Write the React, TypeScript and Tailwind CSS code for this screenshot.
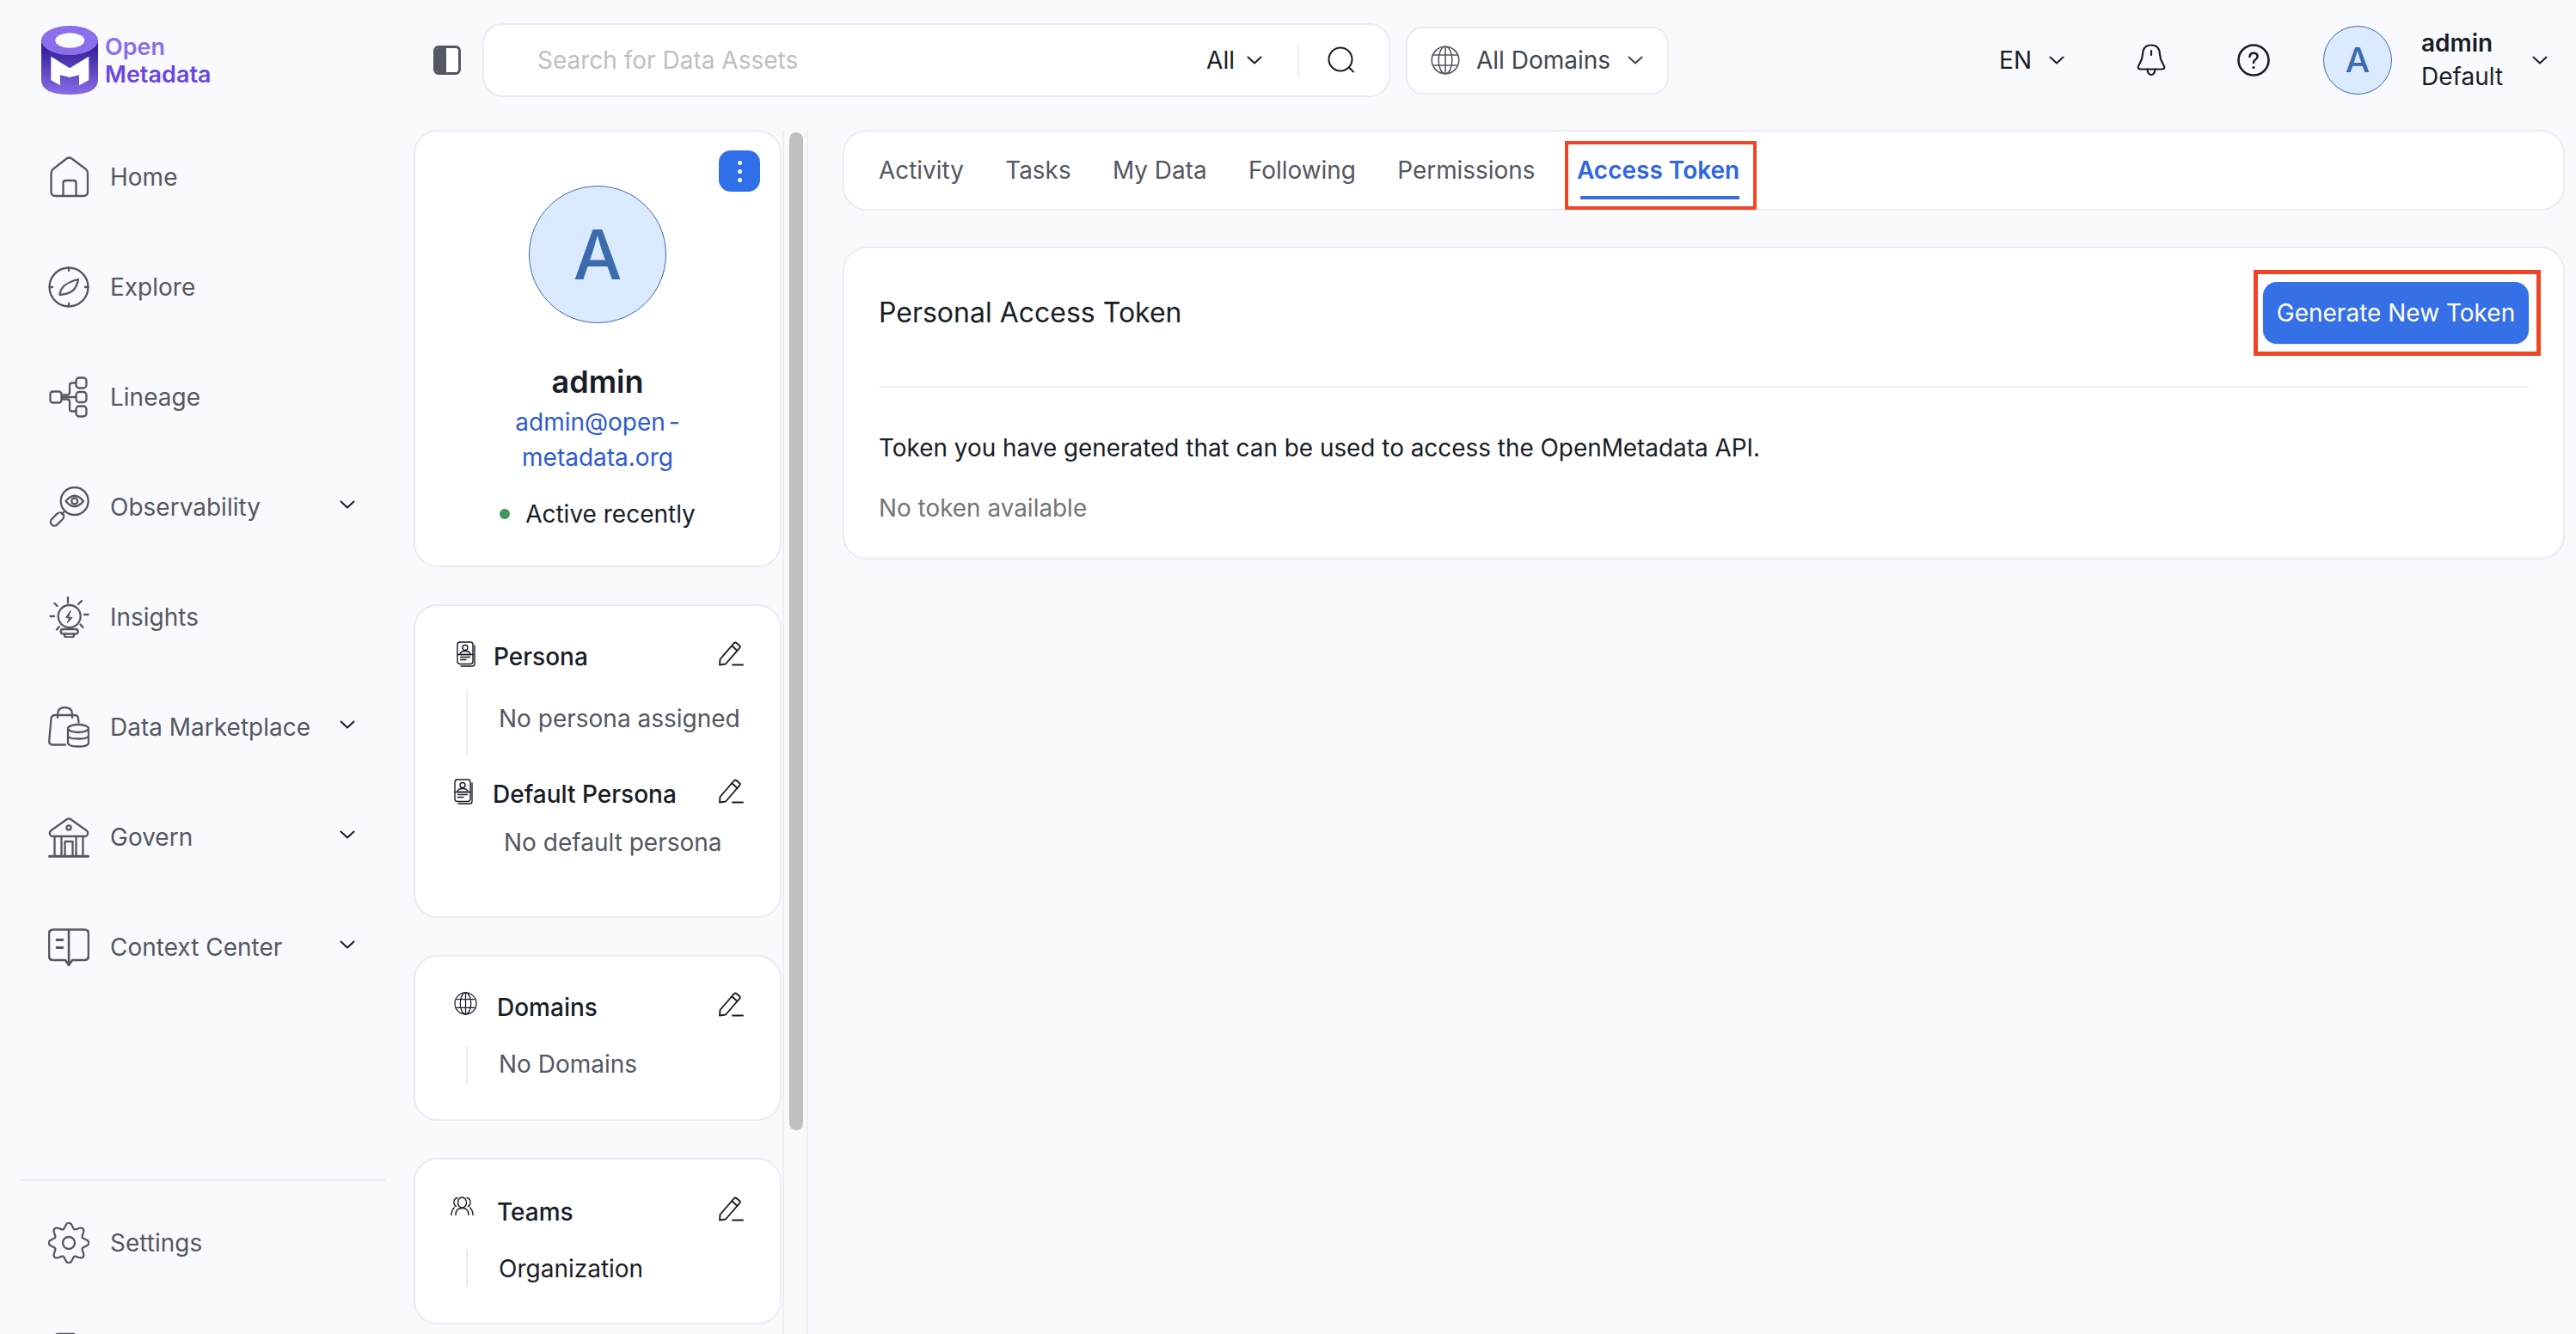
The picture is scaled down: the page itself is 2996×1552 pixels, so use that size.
import type { ReactNode } from 'react'

// 8 lobed gear outline for the settings entry
const gearPath = Array.from({ length: 145 }, (_, i) => {
  const t = (i / 144) * Math.PI * 2
  const r = 20.2 + 3.2 * Math.cos(8 * t)
  const x = 24 + r * Math.sin(t)
  const y = 24 - r * Math.cos(t)
  return `${i === 0 ? 'M' : 'L'}${x.toFixed(2)} ${y.toFixed(2)}`
}).join(' ')

function NavSvg({ children }: { children: ReactNode }) {
  return (
    <svg
      viewBox="0 0 48 48"
      fill="none"
      stroke="#535862"
      strokeWidth="2.3"
      strokeLinecap="round"
      strokeLinejoin="round"
      className="w-[48px] h-[48px] shrink-0"
    >
      {children}
    </svg>
  )
}

const HomeIcon = () => (
  <NavSvg>
    <path d="M21.5 2.5L6 14.5Q3.500 16.500 3.500 19.500V41Q3.500 46 8.500 46H41Q46 46 46 41V19.500Q46 16.500 43.500 14.500L27.500 2.500Q24.500 .5 21.500 2.500Z" />
    <path d="M17.500 46V31Q17.500 28 20.500 28H29.500Q32.500 28 32.500 31V46" />
  </NavSvg>
)

const ExploreIcon = () => (
  <NavSvg>
    <circle cx="24" cy="24" r="22.500" />
    <path d="M24 1.500V5M24 43V46.500M1.500 24H5M43 24H46.500" />
    <path d="M13.500 33C14.500 25 19 19 35 15C33 27 27 32 13.500 33Z" />
  </NavSvg>
)

const LineageIcon = () => (
  <NavSvg>
    <rect x="2.500" y="17.500" width="13" height="13" rx="3" />
    <rect x="32.500" y="1.500" width="12" height="12" rx="3.500" />
    <rect x="32.500" y="18" width="12" height="12" rx="3.500" />
    <rect x="32.500" y="34.500" width="12" height="12" rx="3.500" />
    <path d="M16 21.500H22Q25 21.500 25 18.500V10Q25 7.500 28 7.500H32.500" />
    <path d="M16 26.500H22Q25 26.500 25 29.500V38Q25 40.500 28 40.500H32.500" />
    <path d="M16 24H32.500" />
  </NavSvg>
)

const ObservabilityIcon = () => (
  <NavSvg>
    <circle cx="30.700" cy="17" r="16" />
    <path d="M20.500 17Q30.700 4.500 41 17Q30.700 29.500 20.500 17Z" />
    <circle cx="30.700" cy="17" r="3.500" />
    <path d="M19.500 28.500L16 32" />
    <rect x="1.500" y="33.500" width="18" height="9" rx="4.500" transform="rotate(-45 10.500 38)" />
  </NavSvg>
)

const InsightsIcon = () => (
  <NavSvg>
    <circle cx="24.700" cy="23" r="13" />
    <path d="M23 1V7.500M7.500 8L10.500 11M39 5L35 9M2.500 23H7M42 21H46.500M10 38.500L13 35M40.500 36L37.500 32.500" />
    <rect x="14.700" y="38" width="20" height="5.500" rx="2.700" />
    <path d="M19 43.500V45Q19 47.500 22 47.500H27Q30 47.500 30 45V43.500" />
    <path d="M26 17L21 24.500H27.500L22.500 30" fill="#535862" strokeWidth="1.500" />
  </NavSvg>
)

const MarketplaceIcon = () => (
  <NavSvg>
    <path d="M20 44.500H5.500Q1 44.500 1.200 40L3.500 14Q4 10 8 10H30.500Q34.500 10 35 14L35.500 18.500" />
    <path d="M11 13V9Q11 1 19.500 1Q28 1 28 9V13" />
    <ellipse cx="35" cy="25.500" rx="12" ry="4.500" />
    <path d="M23 25.500V42Q23 46.500 35 46.500Q47 46.500 47 42V25.500" />
    <path d="M23 34Q23 37.500 35 37.500Q47 37.500 47 34" />
  </NavSvg>
)

const GovernIcon = () => (
  <NavSvg>
    <path d="M22 3L3 16.500Q1 18.500 2.500 21.500Q3 23 5 23H43Q45 23 45.500 21.500Q47 18.500 45 16.500L26 3Q24 1.700 22 3Z" />
    <circle cx="24" cy="13" r="2.600" />
    <path d="M7.500 23V45M15.500 23V45M32.500 23V45M40.500 23V45" />
    <path d="M19.500 45V29H28.500V45" />
    <path d="M1.500 46.300H46.500" strokeWidth="3" />
  </NavSvg>
)

const ContextIcon = () => (
  <NavSvg>
    <path
      d="M24 3.500H6Q1 3.500 1 8.500V34Q1 39 6 39H20L24 45L28 39H42Q47 39 47 34V8.500Q47 3.500 42 3.500H24ZM24 3.500V42"
      strokeWidth="2.600"
    />
    <path d="M10 15.500H17M10 24.500H17" strokeWidth="2.800" />
  </NavSvg>
)

const SettingsIcon = () => (
  <NavSvg>
    <path d={gearPath} />
    <circle cx="24" cy="24" r="7" />
  </NavSvg>
)

const LogoutIcon = () => (
  <NavSvg>
    <path d="M30 2H12Q8 2 8 6V42Q8 46 12 46H30M22 24H44M36 16L44 24L36 32" />
  </NavSvg>
)

function Chevron({ stroke = '#181d27', className = '' }: { stroke?: string; className?: string }) {
  return (
    <svg viewBox="0 0 18 10" fill="none" stroke={stroke} strokeLinecap="round" strokeLinejoin="round" strokeWidth="2" className={className}>
      <path d="M1.500 1.500L9 8.500L16.500 1.500" />
    </svg>
  )
}

function PencilIcon() {
  return (
    <svg viewBox="0 0 29 29" fill="none" stroke="#181d27" strokeWidth="1.900" strokeLinecap="round" strokeLinejoin="round" className="w-[29px] h-[29px] shrink-0">
      <path d="M1 27.500L1.500 21L17.500 2.500Q19 1 20.500 2L24 5Q25.500 6.500 24 8L8 26.500Z" />
      <path d="M15.500 5.500L21.500 11" />
      <path d="M16 27.500H28" />
    </svg>
  )
}

function PersonaIcon() {
  return (
    <svg viewBox="0 0 22 30" fill="none" stroke="#181d27" strokeWidth="1.400" strokeLinecap="round" strokeLinejoin="round" className="w-[22px] h-[30px] shrink-0">
      <rect x="1" y="1" width="18" height="25.500" rx="3" />
      <path d="M21 5V26.500Q21 29 18.500 29H5" />
      <circle cx="10" cy="7.500" r="3" />
      <path d="M4 15.500Q4 11.500 10 11.500Q16 11.500 16 15.500Z" />
      <path d="M1 15.500H19M4.500 18.500H15.500M4.500 21.500H11" />
    </svg>
  )
}

function GlobeIcon({ stroke, className }: { stroke: string; className: string }) {
  return (
    <svg viewBox="0 0 28 28" fill="none" stroke={stroke} strokeWidth="1.300" className={className}>
      <circle cx="14" cy="14" r="13" />
      <ellipse cx="14" cy="14" rx="6.500" ry="13" />
      <path d="M14 1V27M2.500 9H25.500M2.500 19H25.500" />
    </svg>
  )
}

function TeamsIcon() {
  return (
    <svg viewBox="0 0 27 23" fill="none" stroke="#181d27" strokeWidth="1.400" strokeLinecap="round" className="w-[27px] h-[23px] shrink-0">
      <ellipse cx="13.500" cy="7" rx="5" ry="6" />
      <path d="M6 21.500Q6 13.500 13.500 13.500Q21 13.500 21 21.500" />
      <path d="M8 1.500Q3 3 4 8Q4.500 10.500 6.500 11.500M1 21.500Q1 16 4.500 13" />
      <path d="M19 1.500Q24 3 23 8Q22.500 10.500 20.500 11.500M26 21.500Q26 16 22.500 13" />
    </svg>
  )
}

function Logo() {
  return (
    <svg viewBox="0 0 66 80" className="w-[66px] h-[80px] shrink-0">
      <defs>
        <linearGradient id="logoBody" x1="0" y1="0" x2="0" y2="1">
          <stop offset="0.15" stopColor="#35229a" />
          <stop offset="1" stopColor="#8a6ce8" />
        </linearGradient>
      </defs>
      <path d="M0 17V63Q0 80 33 80Q66 80 66 63V17Z" fill="url(#logoBody)" />
      <ellipse cx="33" cy="17" rx="33" ry="17" fill="#8b6ee9" />
      <ellipse cx="33.300" cy="17" rx="17" ry="8.700" fill="#f9fafe" />
      <path d="M11.300 35.700L33 49.300L55.300 35.700V63.300L44 69.300V57.300L33 60L22 57.300V69.300L11.300 63.300Z" fill="#fff" />
    </svg>
  )
}

function NavItem({ icon, label, hasMenu }: { icon: ReactNode; label: string; hasMenu?: boolean }) {
  return (
    <div className="flex items-center h-[128px] pl-[56px] shrink-0">
      {icon}
      <span className="ml-[24px] text-[28px] leading-[40px] text-[#535862]">{label}</span>
      {hasMenu && <Chevron className="w-[18px] h-[10px] absolute left-[395px] -mt-[6px]" />}
    </div>
  )
}

function Avatar({ className, textClass }: { className: string; textClass: string }) {
  return (
    <div className={`flex items-center justify-center rounded-full bg-[#dbeafe] border border-[#3a6cad] shrink-0 ${className}`}>
      <span className={`text-[#3a6cad] font-medium ${textClass}`}>A</span>
    </div>
  )
}

function Card({ className, children }: { className: string; children: ReactNode }) {
  return <div className={`bg-white border-2 border-[#eaecf5] rounded-[28px] ${className}`}>{children}</div>
}

function SectionHead({ icon, title, className }: { icon: ReactNode; title: string; className: string }) {
  return (
    <div className={`flex items-start pr-[42px] ${className}`}>
      {icon}
      <span className="text-[28px] leading-[36px] font-medium text-[#181d27]">{title}</span>
      <span className="ml-auto">
        <PencilIcon />
      </span>
    </div>
  )
}

function Rail({ text, className, textClass }: { text: string; className: string; textClass: string }) {
  return (
    <div className={`ml-[59px] border-l-2 border-[#eaecf5] pl-[36px] text-[28px] leading-[40px] ${className} ${textClass}`}>
      {text}
    </div>
  )
}

export default function App() {
  return (
    <div className="flex h-screen overflow-hidden bg-[#f9fafe] font-[Inter,sans-serif]">
      <aside className="w-[472px] shrink-0 flex flex-col">
        <div className="h-[142px] shrink-0 pl-[48px] pt-[30px] flex gap-[8px]">
          <Logo />
          <div className="pt-[9px] text-[27px] leading-[32px] font-semibold">
            <div className="text-[#8b6ee9]">Open</div>
            <div className="text-[#6a47de]">Metadata</div>
          </div>
        </div>
        <NavItem icon={<HomeIcon />} label="Home" />
        <NavItem icon={<ExploreIcon />} label="Explore" />
        <NavItem icon={<LineageIcon />} label="Lineage" />
        <NavItem icon={<ObservabilityIcon />} label="Observability" hasMenu />
        <NavItem icon={<InsightsIcon />} label="Insights" />
        <NavItem icon={<MarketplaceIcon />} label="Data Marketplace" hasMenu />
        <NavItem icon={<GovernIcon />} label="Govern" hasMenu />
        <NavItem icon={<ContextIcon />} label="Context Center" hasMenu />
        <div className="mt-[206px] mb-[8px] mx-[24px] w-[424px] border-t-2 border-[#eaecf5] shrink-0" />
        <NavItem icon={<SettingsIcon />} label="Settings" />
        <div className="flex items-center h-[128px] pl-[56px] shrink-0">
          <LogoutIcon />
        </div>
      </aside>

      <div className="flex-1 min-w-0 flex flex-col">
        <header className="h-[140px] shrink-0 flex items-center pl-[32px] pr-[33px]">
          <div className="w-[32px] h-[34px] rounded-[6px] border-[3px] border-[#535862] bg-white flex overflow-hidden shrink-0">
            <div className="w-[12px] bg-[#535862]" />
          </div>
          <div className="ml-[25px] w-[1056px] h-[86px] bg-white border-2 border-[#eaecf5] rounded-[24px] flex items-center pl-[62px] shrink-0">
            <span className="text-[28px] text-[#bfbfbf]">Search for Data Assets</span>
            <span className="ml-auto text-[28px] text-[#181d27]">All</span>
            <Chevron className="w-[18px] h-[10px] ml-[14px]" />
            <div className="ml-[41px] w-[2px] h-[40px] bg-[#eeeff3]" />
            <svg viewBox="0 0 33 32" fill="none" stroke="#181d27" strokeWidth="2" strokeLinecap="round" className="w-[33px] h-[32px] ml-[33px] mr-[38px]">
              <circle cx="15" cy="15" r="13.500" />
              <path d="M25.500 25L30 29.500" />
            </svg>
          </div>
          <div className="ml-[18px] w-[306px] h-[79px] bg-white border-2 border-[#eaecf5] rounded-[20px] flex items-center pl-[27px] shrink-0">
            <GlobeIcon stroke="#535862" className="w-[34px] h-[34px] shrink-0" />
            <span className="ml-[19px] text-[28px] text-[#414651]">All Domains</span>
            <Chevron stroke="#414651" className="w-[18px] h-[10px] ml-[20px]" />
          </div>
          <div className="ml-auto flex items-center">
            <span className="text-[28px] text-[#181d27]">EN</span>
            <Chevron className="w-[18px] h-[10px] ml-[20px]" />
            <svg viewBox="0 0 34 38" fill="none" stroke="#181d27" strokeWidth="2.200" strokeLinecap="round" strokeLinejoin="round" className="w-[34px] h-[38px] ml-[84px]">
              <path d="M17 1.500Q7.500 1.500 7 12C6.800 20 3 23 1.800 26.500Q1.200 29.500 4.500 29.500H29.500Q32.800 29.500 32.200 26.500C31 23 27.200 20 27 12Q26.500 1.500 17 1.500Z" />
              <path d="M17 8V13M12.500 29.500Q13 36 17 36Q21 36 21.500 29.500" />
            </svg>
            <svg viewBox="0 0 38 38" fill="none" stroke="#181d27" strokeWidth="2.600" strokeLinecap="round" className="w-[38px] h-[38px] ml-[83px]">
              <circle cx="19" cy="19" r="17.500" />
              <path d="M14.500 15Q14.800 10.800 19 10.800Q23.500 10.800 23.500 14.800Q23.500 17 21 18.500Q19 19.700 19 22" />
              <path d="M19 27.500V27.600" strokeWidth="3.200" />
            </svg>
            <Avatar className="ml-[62px] w-[80px] h-[80px]" textClass="text-[40px]" />
            <div className="ml-[34px] text-[28px] leading-[39px] text-[#181d27] w-[95px]">
              <div className="font-semibold">admin</div>
              <div>Default</div>
            </div>
            <Chevron className="w-[18px] h-[10px] ml-[34px]" />
          </div>
        </header>

        <main className="flex-1 min-h-0 mt-[11px] pl-[9px] pr-[13px] flex overflow-hidden">
          <div className="w-[428px] shrink-0 flex flex-col gap-[43px]">
            <Card className="h-[509px] shrink-0 flex flex-col items-center pt-[63px] relative">
              <div className="absolute top-[22px] right-[23px] w-[48px] h-[48px] rounded-[14px] bg-[#2f6fe8] flex flex-col items-center justify-center gap-[5px]">
                <span className="w-[5px] h-[5px] rounded-full bg-white" />
                <span className="w-[5px] h-[5px] rounded-full bg-white" />
                <span className="w-[5px] h-[5px] rounded-full bg-white" />
              </div>
              <Avatar className="w-[160px] h-[160px]" textClass="text-[80px]" />
              <div className="mt-[46px] text-[36px] leading-[44px] font-semibold text-[#181d27]">admin</div>
              <div className="mt-[5px] text-[28px] leading-[41px] text-[#2d5bd0] text-center">
                <div>
                  admin@open<span className="ml-[4px]">-</span>
                </div>
                <div>metadata.org</div>
              </div>
              <div className="mt-[25px] flex items-center gap-[18px] text-[28px] leading-[40px] text-[#181d27]">
                <span className="w-[12px] h-[12px] rounded-full bg-[#40965a]" />
                Active recently
              </div>
            </Card>

            <Card className="h-[365px] shrink-0 pt-[41px]">
              <SectionHead icon={<PersonaIcon />} title="Persona" className="pl-[48px] gap-[21px]" />
              <Rail text="No persona assigned" className="mt-[20px] h-[76px] pt-[14px]" textClass="text-[#535862]" />
              <SectionHead icon={<PersonaIcon />} title="Default Persona" className="mt-[28px] pl-[45px] gap-[23px]" />
              <div className="mt-[18px] pl-[103px] text-[28px] leading-[40px] text-[#535862]">No default persona</div>
            </Card>

            <Card className="h-[193px] shrink-0 pt-[41px]">
              <SectionHead icon={<GlobeIcon stroke="#181d27" className="w-[27px] h-[27px] shrink-0" />} title="Domains" className="pl-[45px] gap-[23px]" />
              <Rail text="No Domains" className="mt-[27px] h-[44px] pt-[1px]" textClass="text-[#535862]" />
            </Card>

            <Card className="h-[194px] shrink-0 pt-[43px]">
              <SectionHead icon={<TeamsIcon />} title="Teams" className="pl-[41px] gap-[27px]" />
              <Rail text="Organization" className="mt-[25px] h-[44px] pt-[3px]" textClass="text-[#181d27]" />
            </Card>
          </div>

          <div className="ml-[1px] w-[30px] shrink-0 border-x-2 border-[#eeeff3] bg-[#fafafa] pl-[6px] pt-[3px]">
            <div className="w-[16px] h-[1161px] rounded-[8px] bg-[#bfbfbf]" />
          </div>

          <div className="ml-[40px] flex-1 min-w-0 flex flex-col gap-[42px]">
            <Card className="h-[94px] shrink-0 pl-[40px] pt-[25px] flex gap-[48.4px] text-[27.9px] leading-[40px] text-[#535862]">
              <span>Activity</span>
              <span>Tasks</span>
              <span>My Data</span>
              <span>Following</span>
              <span>Permissions</span>
              <div className="relative h-[54px] text-[28px]">
                <span className="font-semibold text-[#2f66e4]">Access Token</span>
                <div className="absolute left-[4px] right-0 top-[50px] h-[4px] bg-[#3b6ee6]" />
                <div className="absolute -left-[14px] -right-[20px] -top-[14px] -bottom-[12px] border-[4px] border-[#ef4526]" />
              </div>
            </Card>

            <Card className="h-[364px] shrink-0 px-[40px] pt-[39px]">
              <div className="flex items-center justify-between pb-[49px] border-b-2 border-[#eeeff3]">
                <span className="text-[32px] text-[#181d27]">Personal Access Token</span>
                <div className="relative">
                  <button className="w-[309px] h-[72px] rounded-[16px] bg-[#3670e6] text-white text-[28px] shadow-sm">
                    Generate New Token
                  </button>
                  <div className="absolute -left-[11px] -right-[14px] -top-[14px] -bottom-[14px] border-[5px] border-[#ef4526]" />
                </div>
              </div>
              <p className="mt-[50px] text-[27.9px] leading-[40px] text-[#181d27]">
                Token you have generated that can be used to access the OpenMetadata API.
              </p>
              <p className="mt-[30px] text-[27.9px] leading-[40px] text-[#757575]">No token available</p>
            </Card>
          </div>
        </main>
      </div>
    </div>
  )
}
